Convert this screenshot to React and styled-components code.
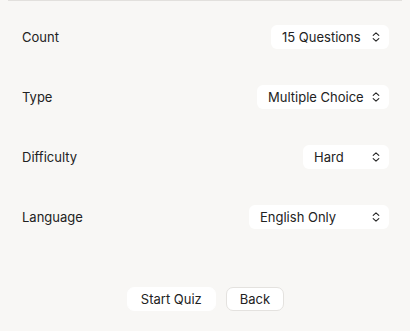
import React from "react";
import styled, { createGlobalStyle } from "styled-components";

const Global = createGlobalStyle`
  html, body { margin: 0; padding: 0; background: #f8f7f5; }
  body { font-family: Inter, "Noto Sans", sans-serif; color: #222222; }
`;

const Page = styled.div`
  width: 410px;
  height: 331px;
  background: #f8f7f5;
  box-sizing: border-box;
`;

const Divider = styled.div`
  height: 1px;
  margin: 0 8px;
  background: #e2e0dd;
`;

const Form = styled.div`
  display: flex;
  flex-direction: column;
  padding: 6px 21px 0 22px;
`;

const Row = styled.div`
  height: 60px;
  display: flex;
  align-items: center;
  justify-content: space-between;
`;

const Label = styled.span`
  font-size: 13px;
`;

const Select = styled.div`
  width: ${(p) => p.$w}px;
  height: 24px;
  box-sizing: border-box;
  display: flex;
  align-items: center;
  justify-content: space-between;
  padding: 0 9px 0 11px;
  background: #ffffff;
  border-radius: 6px;
  font-size: 13px;
`;

const Actions = styled.div`
  display: flex;
  justify-content: center;
  gap: 10px;
  margin-top: 40px;
`;

const Button = styled.button`
  height: 24px;
  padding: 0 13px;
  font-family: Inter, "Noto Sans", sans-serif;
  font-size: 13px;
  color: #222222;
  background: #ffffff;
  border: 1px solid ${(p) => (p.$outlined ? "#e4e2df" : "#ffffff")};
  border-radius: 7px;
  cursor: pointer;
`;

const Chevron = () => (
  <svg width="8" height="10" viewBox="0 0 8 10" fill="none">
    <path d="M1.2 3.4 L4 0.9 L6.8 3.4" stroke="#222" strokeWidth="1.1" strokeLinecap="round" strokeLinejoin="round" />
    <path d="M1.2 6.6 L4 9.1 L6.8 6.6" stroke="#222" strokeWidth="1.1" strokeLinecap="round" strokeLinejoin="round" />
  </svg>
);

const rows = [
  { label: "Count", value: "15 Questions", w: 118 },
  { label: "Type", value: "Multiple Choice", w: 132 },
  { label: "Difficulty", value: "Hard", w: 86 },
  { label: "Language", value: "English Only", w: 140 },
];

export default function App() {
  return (
    <Page>
      <Global />
      <Divider />
      <Form>
        {rows.map((r) => (
          <Row key={r.label}>
            <Label>{r.label}</Label>
            <Select $w={r.w}>
              <span>{r.value}</span>
              <Chevron />
            </Select>
          </Row>
        ))}
        <Actions>
          <Button>Start Quiz</Button>
          <Button $outlined>Back</Button>
        </Actions>
      </Form>
    </Page>
  );
}
